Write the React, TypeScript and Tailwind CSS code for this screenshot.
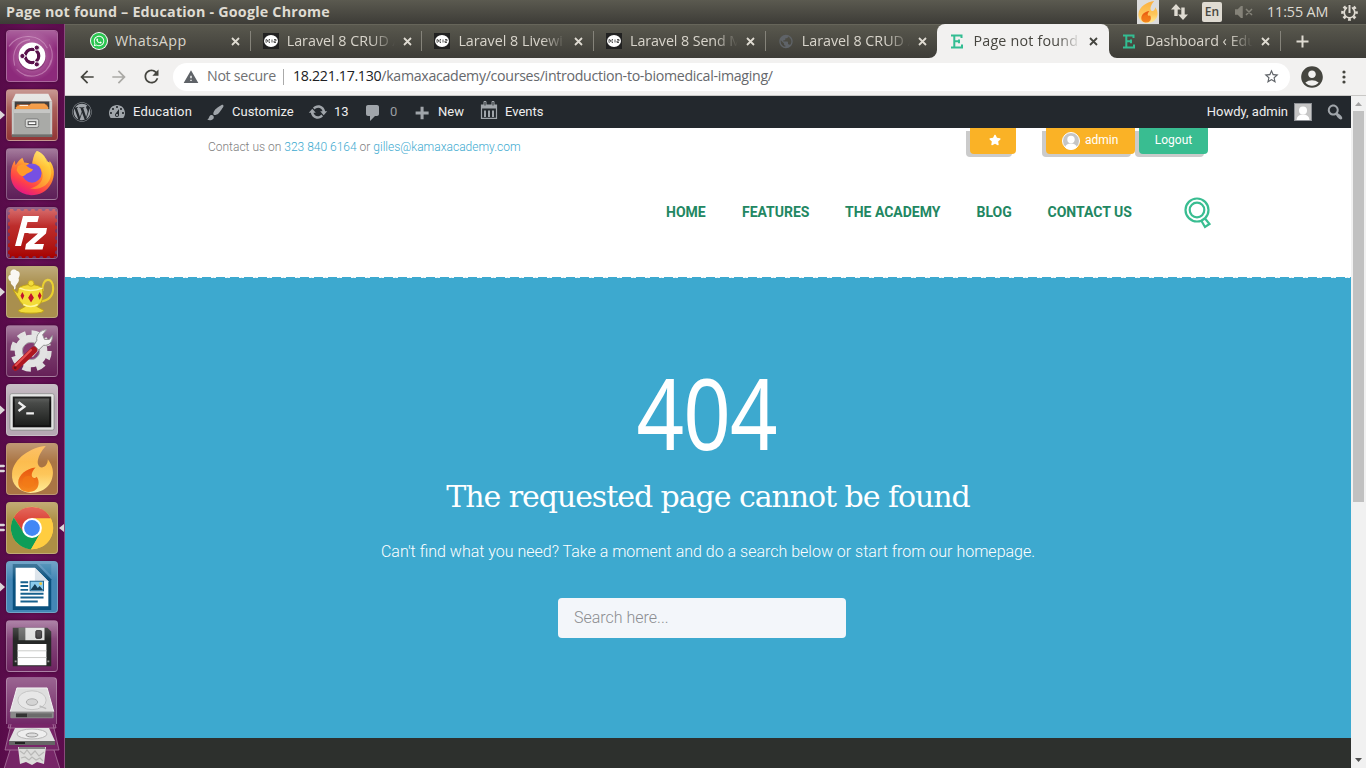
import React from "react";
import { FaWhatsapp, FaStar, FaWordpress } from "react-icons/fa";
import { MdStarBorder, MdAccountCircle, MdArrowBack, MdArrowForward, MdRefresh, MdWarning, MdPublic } from "react-icons/md";

function Flame({ size = 46 }: { size?: number }) {
  return (
    <svg width={size} height={size} viewBox="0 0 46 46">
      <defs>
        <linearGradient id="fl1" x1="0" y1="0" x2="0" y2="1">
          <stop offset="0" stopColor="#fbb040" />
          <stop offset="0.6" stopColor="#fdc65a" />
          <stop offset="1" stopColor="#ffee9a" />
        </linearGradient>
        <linearGradient id="fl2" x1="0" y1="0" x2="0" y2="1">
          <stop offset="0" stopColor="#e8560f" />
          <stop offset="1" stopColor="#f58a1f" />
        </linearGradient>
      </defs>
      <path d="M36 0C22 1 4 12 3 27c-1 11 7 18 18 19 14 0 22-9 22-20 0-6-3-10-5-13 0 5-3 8-6 8-6-1-5-11 4-21Z" fill="url(#fl1)" />
      <path d="M26 21c-9 1-17 7-17 15 0 6 5 9 10 9 7 0 10-4 10-9 0-3-1-5-2-6-1 1-2 2-3 1-3-1-2-6 2-10Z" fill="url(#fl2)" />
      <circle cx="19" cy="35" r="6" fill="#f47b16" opacity=".6" />
    </svg>
  );
}

function Tile({ tone, children, left, right }: { tone: string; children: React.ReactNode; left?: number; right?: boolean }) {
  return (
    <div className="relative flex h-[52px] w-[65px] shrink-0 pl-[6px]">
      <div className={"relative flex h-[52px] w-[52px] items-center justify-center overflow-hidden rounded-[4px] border border-white/25 shadow-[0_0_3px_rgba(0,0,0,0.35)] " + tone}>
        {children}
        <div className="pointer-events-none absolute inset-x-0 top-0 h-[18px] bg-gradient-to-b from-white/25 to-transparent" />
      </div>
      {left === 1 && (
        <svg className="absolute left-0 top-[21px]" width="5" height="10"><path d="M0 0.500L5 5L0 9.500Z" fill="#dcd6d9" /></svg>
      )}
      {left === 2 && (
        <svg className="absolute left-0 top-[21px]" width="5" height="9"><path d="M0 1H4L5 2L4 3H0ZM0 6H4L5 7L4 8H0Z" fill="#dcd6d9" stroke="#dcd6d9" strokeWidth=".5" /></svg>
      )}
      {right && (
        <svg className="absolute right-[1px] top-[21px]" width="5" height="10"><path d="M5 1L0 5L5 9Z" fill="#dcd6d9" /></svg>
      )}
    </div>
  );
}

function Disk() {
  return (
    <svg width="48" height="34" viewBox="0 0 50 36">
      <path d="M9 1H41L48 26H2Z" fill="#dedede" stroke="#f6f6f6" />
      <path d="M2 26H48V32Q48 33 47 33H3Q2 33 2 32Z" fill="#8a8a8a" />
      <path d="M8 28h12v4H8z" fill="#333" />
      <path d="M20 28h26v4H20z" fill="#6b6b6b" />
      <ellipse cx="25" cy="14" rx="15" ry="10" fill="#e7e7e7" stroke="#c3c3c3" />
      <ellipse cx="25" cy="16" rx="6" ry="3.500" fill="#d4d4d4" stroke="#aaa" />
      <path d="M33 20l7 3" stroke="#bbb" strokeWidth="1.500" />
    </svg>
  );
}

function Launcher() {
  return (
    <div className="flex h-full w-[65px] shrink-0 flex-col gap-[7px] overflow-hidden border-r border-[#8a4a7c] bg-gradient-to-r from-[#570b49] via-[#650f54] to-[#5b0c4c] pt-[6px]">
      <Tile tone="bg-[#90367e]">
        <svg width="52" height="52" viewBox="0 0 52 52">
          <defs>
            <radialGradient id="ub"><stop offset="0" stopColor="#c682b5" /><stop offset="1" stopColor="#8d2a7b" /></radialGradient>
          </defs>
          <rect width="52" height="52" fill="url(#ub)" />
          <path d="M2 16C12 2 34 2 42 18M44 14C54 32 38 52 18 46M8 36C4 20 12 10 24 9M46 30C42 48 22 52 10 40" fill="none" stroke="#dda9cf" strokeWidth="1.200" opacity=".5" />
          <circle cx="26" cy="27" r="14.500" fill="#6d1e5e" opacity=".5" />
          <circle cx="26" cy="26" r="14" fill="#fff" />
          <circle cx="26" cy="26" r="7" fill="none" stroke="#59114b" strokeWidth="3.400" />
          <path d="M26 26L17.500 26M26 26L30.500 18.200M26 26L30.500 33.800" stroke="#fff" strokeWidth="1.200" />
          <circle cx="26" cy="26" r="5.200" fill="#fff" />
          <circle cx="16" cy="26" r="2.700" fill="#59114b" stroke="#fff" />
          <circle cx="31" cy="17.300" r="2.700" fill="#59114b" stroke="#fff" />
          <circle cx="31" cy="34.700" r="2.700" fill="#59114b" stroke="#fff" />
        </svg>
      </Tile>
      <Tile tone="bg-gradient-to-b from-[#b5766f] to-[#923535]" left={1}>
        <svg width="52" height="52" viewBox="0 0 52 52">
          <path d="M9 4H43L47 12H5Z" fill="#e2e2df" />
          <path d="M5 12H47V47H5Z" fill="#c9c9c7" />
          <path d="M8 12H44V22H8Z" fill="#333" />
          <path d="M10 15H42V22H10Z" fill="#c85413" />
          <path d="M9 18L12 16H23L25 14H39L43 18V22H9Z" fill="#f49b45" />
          <path d="M13 16H22" stroke="#fff" strokeWidth="1" />
          <path d="M7 20H45V46H7Z" fill="#a9aaa7" />
          <path d="M7 20H45V24H7Z" fill="#c6c6c4" />
          <rect x="19" y="30" width="14" height="9" rx="2" fill="#d9dad8" stroke="#777" />
          <rect x="22" y="33" width="8" height="3" fill="#fff" stroke="#444" />
          <path d="M5 46H47V49H5Z" fill="#6f6f6d" />
        </svg>
      </Tile>
      <Tile tone="bg-gradient-to-b from-[#87507c] to-[#5d1f58]">
        <svg width="52" height="52" viewBox="0 0 52 52">
          <defs>
            <linearGradient id="ff" x1=".8" y1="0" x2=".3" y2="1"><stop offset="0" stopColor="#fff14b" /><stop offset=".4" stopColor="#ff9a27" /><stop offset=".75" stopColor="#ff4248" /><stop offset="1" stopColor="#e31587" /></linearGradient>
            <linearGradient id="ffy" x1="1" y1="0" x2="0" y2="1"><stop offset="0" stopColor="#fff04a" /><stop offset="1" stopColor="#ff8a24" /></linearGradient>
          </defs>
          <path d="M31 2C37 4 40 8 41 13C44 13 45 16 44 12C50 19 50 28 46 36C41 45 34 48 25 48C12 47 3 38 4 25C4 20 6 15 8 12L9 17C11 13 13 11 16 9L18 14C21 14 24 15 26 18C26 12 28 6 31 2Z" fill="url(#ff)" />
          <circle cx="26" cy="25" r="10" fill="#7650e3" />
          <path d="M11 18C20 13 20 20 27 21C26 24 23 24 20 26C16 31 12 26 10 22Z" fill="#ff9a2b" />
          <path d="M31 2C37 4 46 14 46 25C45 39 33 43 24 41C39 38 40 25 33 17C27 13 26 7 31 2Z" fill="url(#ffy)" opacity=".75" />
        </svg>
      </Tile>
      <Tile tone="bg-[#723363]">
        <div className="relative flex h-[49px] w-[49px] items-center justify-center bg-gradient-to-b from-[#c93c3c] to-[#a70000]">
          <svg className="absolute inset-0" width="49" height="49"><rect x="0" y="0" width="49" height="49" fill="none" stroke="#723363" strokeWidth="4" strokeDasharray="0.100 7" strokeLinecap="round" /></svg>
          <svg width="38" height="36" viewBox="0 0 38 36">
            <path d="M10 1H26L24.500 7H14.500L13 13H20L19 18H11.500L8 31H2ZM17 13H34L33 18.500L21 29H31L29.500 34.500H12L13 29L25 18.500H15.500Z" fill="#fff" />
          </svg>
        </div>
      </Tile>
      <Tile tone="bg-[#a98f4e]" left={1}>
        <svg width="52" height="52" viewBox="0 0 52 52">
          <path d="M7 24C9 18 3 20 4 15C0 13 1 8 4 8C2 3 8 1 10 4C15 5 13 10 12 12C14 16 8 18 9 22" fill="#fff" opacity=".92" />
          <path d="M37 25C36 10 48 10 48 22C48 31 42 35 34 36" fill="none" stroke="#e9cf2d" strokeWidth="2.200" />
          <path d="M6 23L10 30L12 33C14 37 17 40 19 41L12 45Q11 48 25 48Q39 48 38 45L31 41C36 38 38 34 37 22C31 17 18 17 12 22L11 27Z" fill="#f2dc39" stroke="#bfa216" />
          <circle cx="25" cy="17" r="3" fill="#f2dc39" stroke="#c8aa18" />
          <path d="M13 22Q24 27 37 22M17 39Q25 43 32 39" fill="none" stroke="#fff79e" strokeWidth="1.500" />
          <path d="M25 27L28 32L25 37L22 32ZM16 26L18 30L16 34L14 30ZM34 26L36 30L34 34L32 30Z" fill="#c3142c" />
        </svg>
      </Tile>
      <Tile tone="bg-gradient-to-b from-[#8b5480] to-[#662058]">
        <svg width="52" height="52" viewBox="0 0 52 52">
          <circle cx="25" cy="26" r="18.500" fill="none" stroke="#dedede" strokeWidth="6" strokeDasharray="8.500 6.030" />
          <circle cx="25" cy="26" r="13" fill="none" stroke="#e2e2e2" strokeWidth="8" />
          <circle cx="25" cy="26" r="9" fill="#853c73" stroke="#aaa" />
          <path d="M25 31L36 18" stroke="#c8c8c8" strokeWidth="5" />
          <path d="M31 15C30 9 35 4 41 4L37 9L39 14L44 14L47 10C48 17 43 21 38 20L33 25L28 20Z" fill="#f1f1f1" stroke="#888" />
          <path d="M9 43L28 25" stroke="#ae1720" strokeWidth="7" strokeLinecap="round" />
          <path d="M9 41L25 25" stroke="#e65353" strokeWidth="2" strokeLinecap="round" />
          <circle cx="8.500" cy="43.500" r="1.500" fill="#671117" />
        </svg>
      </Tile>
      <Tile tone="bg-[#b6a8b3]" left={1}>
        <svg width="52" height="52" viewBox="0 0 52 52">
          <defs><linearGradient id="tm" x1="0" y1="0" x2="0" y2="1"><stop offset="0" stopColor="#535553" /><stop offset="1" stopColor="#1b1d1b" /></linearGradient></defs>
          <rect x="3" y="9" width="46" height="38" rx="2" fill="#e2e3e2" stroke="#8a8a8a" />
          <rect x="7" y="13" width="38" height="30" fill="url(#tm)" stroke="#111" strokeWidth="2" />
          <path d="M12 18L18 22.500L12 27M20 29.500H28" fill="none" stroke="#f0f0f0" strokeWidth="2.500" />
        </svg>
      </Tile>
      <Tile tone="bg-[#aa7544]" left={2}><Flame size={47} /></Tile>
      <Tile tone="bg-[#ad8f45]" left={2} right>
        <svg width="52" height="52" viewBox="0 0 52 52">
          <circle cx="26" cy="26" r="22" fill="#ffcd40" />
          <path d="M26 26L26 16H45.500A22 22 0 0 0 7 15L17.500 31Z" fill="#dc4437" />
          <path d="M7 15A22 22 0 0 0 25 48L35 31L17.500 31Z" fill="#0f9d58" />
          <path d="M25 48L34.700 31L35.500 25L26 16H45.600A22 22 0 0 1 25 48Z" fill="#ffcd40" />
          <circle cx="26" cy="26" r="10.300" fill="#fff" />
          <circle cx="26" cy="26" r="8.200" fill="#4387f5" />
        </svg>
      </Tile>
      <Tile tone="bg-[#4386b5]" left={1}>
        <svg width="52" height="52" viewBox="0 0 52 52">
          <path d="M6 2H31L46 18V50H6Z" fill="#0a517e" />
          <path d="M34 2H46V14Z" fill="#2877a7" />
          <path d="M9 6H29L43 20V46H9Z" fill="#fff" />
          <path d="M29 6V20H43Z" fill="#dbe3ea" />
          <path d="M14 21H22M14 25H22M14 29H22M14 33H38M14 37H38M14 41H32" stroke="#17618e" strokeWidth="2" />
          <rect x="24" y="20" width="14" height="10" fill="#8acbec" stroke="#17618e" />
          <path d="M24.500 29L29 23L32 27L34 25L37.500 29Z" fill="#153f57" />
          <circle cx="35" cy="22.500" r="1.500" fill="#f0c642" />
        </svg>
      </Tile>
      <Tile tone="bg-gradient-to-b from-[#925a8a] to-[#6d2260]">
        <svg width="52" height="52" viewBox="0 0 52 52">
          <path d="M6 7H42L46 11V47H6Z" fill="#262827" />
          <path d="M12 7H19V20H12Z" fill="#626462" />
          <path d="M19 7H39V20H19Z" fill="#dfe1df" />
          <rect x="30" y="10" width="6" height="8" rx="1" fill="#444" stroke="#222" />
          <path d="M11 24H41V46H11Z" fill="#fff" />
          <path d="M11 31H41M11 38H41" stroke="#c9cac7" />
          <path d="M8 42H10M42 42H44" stroke="#999" strokeWidth="2" />
        </svg>
      </Tile>
      <div className="-mt-[2px] flex flex-col items-center pr-[1px]">
        <div className="flex h-[47px] w-[51px] items-end justify-center rounded-t-[4px] border border-b-0 border-white/25 bg-gradient-to-b from-[#9a6491] to-[#722767] pb-[3px]"><Disk /></div>
        <svg width="60" height="45" viewBox="0 0 60 45">
          <path d="M7 0L6 4H54L53 0M9 0L3 26H57L51 0M8 26L2 45H58L52 26" fill="#8b3b7c" fillOpacity=".55" stroke="#b484aa" strokeOpacity=".7" />
          <path d="M13 4H47L53 17H7Z" fill="#e1e1e1" />
          <ellipse cx="30" cy="10" rx="15" ry="5" fill="#eee" stroke="#b8b8b8" />
          <ellipse cx="30" cy="11" rx="6" ry="2" fill="#ddd" stroke="#999" />
          <path d="M7 17H53V21H7Z" fill="#666" /><path d="M13 18H23V20H13Z" fill="#222" />
          <path d="M16 23H44L42 40L35 38L30 41L24 38L18 40Z" fill="#dddddb" />
          <path d="M18 27L22 30L25 26L29 31L33 27L37 32L42 28M19 34L23 33L27 36L30 33L34 36L38 34L41 37" fill="none" stroke="#b9b9b7" strokeWidth="1.200" />
          <path d="M17 24H43" stroke="#666" strokeWidth="1.500" />
        </svg>
      </div>
    </div>
  );
}

function Close({ dark }: { dark?: boolean }) {
  return (
    <svg width="9" height="9" viewBox="0 0 9 9" className={dark ? "text-[#45453f]" : "text-[#dfdbd2]"}>
      <path d="M1 1L8 8M8 1L1 8" stroke="currentColor" strokeWidth="1.800" />
    </svg>
  );
}

function DevIcon() {
  return (
    <svg width="16" height="16"><rect width="16" height="16" fill="#212121" /><ellipse cx="8" cy="8" rx="7" ry="6" fill="#fff" /><path d="M3 6.500v3M3 6.500q2 0 1.500 2l-1 1M7 6.500h-1v3h1M9 6.500v3M11 6.500h2v1.500h-2v1.500h2" fill="none" stroke="#444" strokeWidth=".9" /></svg>
  );
}

function EIcon() {
  return (
    <svg width="14" height="15" viewBox="0 0 14 15"><path d="M2 1.500H11.500V4M2 13.500H12V10.500M4.300 1.500V13.500M4.300 7.300H9M9 5.500V9.200M1 13.500H4M1 1.500H4" fill="none" stroke="#33bd92" strokeWidth="2" /></svg>
  );
}

function Tab({ icon, title, active, fade, last, spacing }: { icon: React.ReactNode; title: string; active?: boolean; fade?: boolean; last?: boolean; spacing?: string }) {
  return (
    <div className={"relative flex h-[34px] w-[171.700px] shrink-0 items-center " + (active ? "z-10 rounded-t-[8px] bg-[#f2f1f0]" : "")}>
      <div className="ml-[12px] flex w-[16px] items-center justify-center">{icon}</div>
      <div className={"ml-[8px] w-[108px] overflow-hidden whitespace-nowrap text-[14.300px] leading-[20px] " + (spacing ?? "") + " " + (active ? "text-[#474640]" : "text-[#d9d5cc]") + (fade ? " [mask-image:linear-gradient(to_right,black_78%,transparent_100%)]" : "")}>{title}</div>
      <div className="ml-[8px] flex"><Close dark={active} /></div>
      {active && (
        <>
          <svg className="absolute -left-[8px] bottom-0" width="8" height="8"><path d="M8 0V8H0A8 8 0 0 0 8 0Z" fill="#f2f1f0" /></svg>
          <svg className="absolute -right-[8px] bottom-0" width="8" height="8"><path d="M0 0V8H8A8 8 0 0 1 0 0Z" fill="#f2f1f0" /></svg>
        </>
      )}
      {!active && !last && <div className="absolute right-0 top-[7px] h-[20px] w-px bg-[#85837a]" />}
    </div>
  );
}

function TitleBar() {
  return (
    <div className="flex h-[24px] w-full items-center bg-gradient-to-b from-[#5b5a50] to-[#3d3c37] pl-[6px] text-[#dfdbd2]">
      <div className="w-[1131px] whitespace-nowrap text-[14.300px] font-bold leading-[22px] tracking-[0.210px]">Page not found – Education - Google Chrome</div>
      <div className="flex h-[24px] w-[22px] items-center justify-center self-start bg-[#dcdcdc]"><Flame size={22} /></div>
      <svg className="ml-[11px]" width="20" height="18" viewBox="0 0 20 18"><path d="M6 1L1 6.500H4.300V13H7.700V6.500H11ZM13 17L8 11.500H11.300V4.500H14.700V11.500H18Z" fill="#dfdbd2" /></svg>
      <div className="ml-[12px] flex h-[20px] w-[20px] items-center justify-center rounded-[2px] bg-[#dfdbd2] text-[12px] font-semibold text-[#484740]">En</div>
      <svg className="ml-[13px]" width="18" height="12" viewBox="0 0 18 12"><path d="M0 4H3L7 0V12L3 8H0ZM11 3L17 9M17 3L11 9" fill="#858379" stroke="#858379" strokeWidth="1.500" /></svg>
      <div className="ml-[14px] w-[63px] whitespace-nowrap text-[14.300px] leading-[22px]  tracking-[-0.100px]">11:55 AM</div>
      <svg className="ml-[11px]" width="17" height="17" viewBox="0 0 17 17">
        <circle cx="8.500" cy="8.500" r="7" fill="none" stroke="#dfdbd2" strokeWidth="2.600" strokeDasharray="2.750 2.747" strokeDashoffset="1.400" />
        <circle cx="8.500" cy="8.500" r="5.300" fill="none" stroke="#dfdbd2" strokeWidth="1.700" />
        <path d="M8.500 0V9" stroke="#47463f" strokeWidth="4.500" /><path d="M8.500 1V9" stroke="#dfdbd2" strokeWidth="2" />
      </svg>
    </div>
  );
}

function Dash({ d, size = 20 }: { d: string; size?: number }) {
  return <svg width={size} height={size} viewBox="0 0 20 20" className="shrink-0 fill-[#a0a5aa]"><path fillRule="evenodd" d={d} /></svg>;
}

const DASHBOARD = "M3.760 16h12.480c1.100-1.370 1.760-3.110 1.760-5 0-4.420-3.580-8-8-8s-8 3.580-8 8c0 1.890.660 3.630 1.760 5zM10 4c.550 0 1 .450 1 1s-.450 1-1 1-1-.450-1-1 .450-1 1-1zM6 6c.550 0 1 .450 1 1s-.450 1-1 1-1-.450-1-1 .450-1 1-1zm8 0c.550 0 1 .450 1 1s-.450 1-1 1-1-.450-1-1 .450-1 1-1zm-5.370 5.550L12 7v6c0 1.100-.900 2-2 2s-2-.900-2-2c0-.570.240-1.080.630-1.450zM4 10c.550 0 1 .450 1 1s-.450 1-1 1-1-.450-1-1 .450-1 1-1zm12 0c.550 0 1 .450 1 1s-.450 1-1 1-1-.450-1-1 .450-1 1-1zm-5 3c0-.550-.450-1-1-1s-1 .450-1 1 .450 1 1 1 1-.450 1-1z";
const BRUSH = "M18.330 3.570s.270-.800-.310-1.360c-.530-.520-1.220-.240-1.220-.240-.610.300-5.760 3.470-7.670 5.570-.860.960-2.060 3.790-1.090 4.820.920.980 3.960-.170 4.790-1 2.060-2.060 5.210-7.170 5.500-7.790zM1.400 17.650c2.370-1.560 1.460-3.410 3.230-4.640.930-.650 2.220-.620 3.080.290.630.670.800 2.570-.160 3.460-1.570 1.450-4 1.550-6.150.890z";
const UPDATE = "M10.200 3.280c3.530 0 6.430 2.610 6.920 6h2.080l-3.500 4-3.500-4h2.320c-.450-1.970-2.210-3.450-4.320-3.450-1.450 0-2.730.710-3.540 1.780L4.950 5.660C6.230 4.200 8.110 3.280 10.200 3.280zm-.400 13.440c-3.520 0-6.430-2.610-6.920-6H.8l3.500-4c1.170 1.330 2.330 2.670 3.500 4H5.480c.450 1.970 2.210 3.450 4.320 3.450 1.450 0 2.730-.710 3.540-1.780l1.710 1.950c-1.280 1.460-3.150 2.380-5.250 2.380z";
const COMMENT = "M5 3h9c1.100 0 2 .900 2 2v7c0 1.100-.900 2-2 2h-2l-5 5v-5H5c-1.100 0-2-.900-2-2V5c0-1.100.900-2 2-2z";
const PLUS = "M17.500 9v3h-5.300v5.200H9V12H3.800V9H9V4h3.200v5z";
const SEARCH = "M12.140 4.180c1.870 1.870 2.110 4.750.720 6.890.120.100.220.210.360.310.200.160.470.360.810.590.340.240.560.390.660.470.420.310.730.570.940.780.320.320.600.650.840 1 .250.350.440.690.590 1.040.140.350.210.680.180 1-.020.320-.140.590-.360.810s-.490.340-.810.360c-.310.020-.650-.040-.990-.190-.350-.140-.700-.340-1.040-.590-.350-.240-.680-.520-1-.840-.210-.210-.470-.520-.770-.930-.100-.130-.250-.350-.470-.660-.220-.320-.400-.570-.560-.780-.160-.200-.290-.350-.440-.500-2.070 1.090-4.690.760-6.440-.980-2.140-2.150-2.140-5.640 0-7.780 2.150-2.150 5.630-2.150 7.780 0zm-1.410 6.360c1.360-1.370 1.360-3.580 0-4.950-1.370-1.370-3.590-1.370-4.950 0-1.370 1.370-1.370 3.580 0 4.950 1.360 1.370 3.580 1.370 4.950 0z";

function CalendarIcon() {
  return (
    <svg width="20" height="20" viewBox="0 0 20 20" className="-mt-[4px] shrink-0">
      <path d="M2.500 5H17.500V18.300H2.500Z" fill="none" stroke="#a0a5aa" strokeWidth="1.200" />
      <path d="M2 5H18V8.500H2ZM5 10.500H7V17H5ZM9 10.500H11V17H9ZM13 10.500H15V17H13Z" fill="#a0a5aa" />
      <path d="M5 1.500H7V6H5ZM13 1.500H15V6H13Z" fill="#23282d" stroke="#a0a5aa" />
    </svg>
  );
}

function AdminBar() {
  return (
    <div className="flex h-[32px] w-full items-center bg-[#23282d] font-['Roboto',sans-serif] text-[13px] leading-[32px] text-[#eee]">
      <div className="ml-[7px] flex h-[20px] w-[20px] items-center justify-center text-[#a0a5aa]"><FaWordpress size={20} /></div>
      <div className="ml-[15px] flex w-[99px] items-center gap-[6px]"><Dash d={DASHBOARD} /><span className="whitespace-nowrap tracking-[0.150px]">Education</span></div>
      <div className="flex w-[102px] items-center gap-[7px]"><Dash d={BRUSH} size={19} /><span className="whitespace-nowrap">Customize</span></div>
      <div className="flex w-[55px] items-center gap-[6px]"><Dash d={UPDATE} /><span>13</span></div>
      <div className="flex w-[49px] items-center gap-[7px]"><Dash d={COMMENT} /><span className="text-[#9a9ea2]">0</span></div>
      <div className="flex w-[67px] items-center gap-[7px]"><Dash d={PLUS} size={19} /><span>New</span></div>
      <div className="flex items-center gap-[6px]"><CalendarIcon /><span>Events</span></div>
      <div className="ml-auto flex items-center">
        <span className="whitespace-nowrap">Howdy, admin</span>
        <svg className="ml-[6px] -mt-px" width="18" height="18"><rect x=".5" y=".5" width="17" height="17" fill="#c5c5c5" stroke="#8c8f94" /><circle cx="9" cy="7.500" r="4" fill="#fff" /><path d="M2.500 17Q3 11.500 9 11.500T15.500 17Z" fill="#fff" /></svg>
        <div className="ml-[13px] mr-[6px]"><Dash d={SEARCH} /></div>
      </div>
    </div>
  );
}

function Page() {
  return (
    <div className="flex w-[1286px] flex-col">
      <AdminBar />
      <div className="flex h-[149px] w-full flex-col bg-white font-['Roboto',sans-serif]">
        <div className="flex h-[38px] items-start pl-[143px] text-[12px]">
          <div className="mt-[10px] w-[758px] whitespace-nowrap font-light leading-[18px] text-[#808080]">
            Contact us on <span className="text-[#3daad0]">323 840 6164</span> or <span className="text-[#3daad0]">gilles@kamaxacademy.com</span>
          </div>
          <div className="ml-[4px] flex h-[26px] w-[46px] items-center justify-center rounded-b-[4px] bg-[#fab226] pl-[3px] pb-[3px] text-white shadow-[-4px_3px_0_#cbcbcb]"><FaStar size={12} /></div>
          <div className="ml-[30px] flex h-[26px] w-[89px] rounded-b-[4px] bg-[#fab226] pl-[16px] text-white shadow-[-4px_3px_0_#cbcbcb]">
            <svg className="mt-[4px]" width="18" height="18"><circle cx="9" cy="9" r="8.500" fill="#c5c5c5" stroke="#fff" /><circle cx="9" cy="7.500" r="3.700" fill="#fff" /><path d="M3 15.500Q4 11.500 9 11.500T15 15.500Q12 18 9 17.500Q5 18 3 15.500Z" fill="#fff" /></svg>
            <span className="ml-[5px] mt-[3px] leading-[18px]">admin</span>
          </div>
          <div className="ml-[4px] h-[26px] w-[69px] rounded-b-[4px] bg-[#39bd91] pt-[3px] text-center leading-[18px] text-white shadow-[-4px_3px_0_#cbcbcb]">Logout</div>
        </div>
        <div className="mt-[29px] flex h-[34px] items-center pl-[601px] text-[14px] font-bold text-[#228762]">
          <span className="w-[76px]">HOME</span>
          <span className="w-[103px]">FEATURES</span>
          <span className="w-[131.500px] whitespace-nowrap">THE ACADEMY</span>
          <span className="w-[71px]">BLOG</span>
          <span className="w-[135.500px] whitespace-nowrap">CONTACT US</span>
          <svg className="mt-[2px]" width="29" height="32" viewBox="0 0 29 32" fill="none" stroke="#39bd91" strokeWidth="2.200">
            <circle cx="14" cy="13" r="11.500" /><circle cx="14" cy="13" r="7.300" /><path d="M18.500 24L22 30L26.500 27L22 21.500" />
          </svg>
        </div>
      </div>
      <div className="h-px w-full bg-[repeating-linear-gradient(to_right,#3daad0_0_6px,#f4fafc_6px_8px,#cfe6ee_8px_9px,#f4fafc_9px_11px,#3daad0_11px_14px)]" />
      <div className="flex h-[460px] w-full flex-col items-center bg-[#3da9cf] text-white">
        <div className="mt-[86px] h-[96px] origin-center translate-x-[-1px] scale-x-[0.850] text-center font-['Noto_Sans'] text-[98px] font-normal leading-[96px] tracking-[-1px]">404</div>
        <div className="mt-[15px] h-[44px] whitespace-nowrap text-center font-['DejaVu_Serif'] text-[30px] leading-[44px] tracking-[-1.050px]">The requested page cannot be found</div>
        <div className="mt-[21px] whitespace-nowrap font-['Roboto'] text-[16px] font-light leading-[24px]">Can't find what you need? Take a moment and do a search below or start from our homepage.</div>
        <div className="mr-[12px] mt-[34px] flex h-[40px] w-[288px] items-center rounded-[4px] bg-[#f3f6fa] pl-[16px] font-['Roboto'] text-[16px] font-light text-[#8b8d90]">Search here...</div>
      </div>
      <div className="h-[30px] w-full bg-[#2d302d]" />
    </div>
  );
}

export default function App() {
  return (
    <div className="flex h-[768px] w-[1366px] flex-col overflow-hidden bg-white font-['Open_Sans',sans-serif]">
      <TitleBar />
      <div className="flex h-[744px] w-full">
        <Launcher />
        <div className="flex w-[1301px] flex-col">
          <div className="flex h-[34px] w-full border-t border-[#66655a] bg-gradient-to-b from-[#59584e] to-[#3d3c37] pl-[14px]">
            <div className="-mt-px flex">
              <Tab icon={<div className="flex h-[16px] w-[16px] items-center justify-center rounded-full bg-[#2bc551] text-white ring-1 ring-white"><FaWhatsapp size={12} /></div>} title="WhatsApp" spacing="tracking-[0.400px]" />
              <Tab icon={<DevIcon />} title="Laravel 8 CRUD A" fade />
              <Tab icon={<DevIcon />} title="Laravel 8 Livewi" fade />
              <Tab icon={<DevIcon />} title="Laravel 8 Send M" fade spacing="tracking-[-0.100px]" />
              <Tab icon={<MdPublic size={17} color="#5f6368" />} title="Laravel 8 CRUD A" fade last />
              <Tab icon={<EIcon />} title="Page not found" fade active spacing="tracking-[0.200px]" />
              <Tab icon={<EIcon />} title="Dashboard ‹ Edu" fade />
            </div>
            <svg className="ml-[15px] mt-[10px]" width="13" height="13"><path d="M6.500 0.500V12.500M0.500 6.500H12.500" stroke="#dfdbd2" strokeWidth="2" /></svg>
          </div>
          <div className="flex h-[38px] w-full items-center border-b border-[#c9c8c6] bg-[#f2f1f0] text-[#45453f]">
            <MdArrowBack className="ml-[12px]" size={20} />
            <MdArrowForward className="ml-[12px] text-[#aaa9a5]" size={20} />
            <MdRefresh className="ml-[12px]" size={21} />
            <div className="ml-[11px] flex h-[28px] w-[1117px] items-center rounded-full bg-white text-[14.200px]">
              <MdWarning className="ml-[10px] text-[#5f6368]" size={16} />
              <span className="-mt-[2px] ml-[8px] w-[76px] whitespace-nowrap tracking-[-0.300px] text-[#707174]">Not secure</span>
              <div className="h-[16px] w-px bg-[#aaa]" />
              <span className="-mt-[2px] ml-[9px] whitespace-nowrap tracking-[-0.310px] text-[#66686c]"><span className="text-[#202124]">18.221.17.130</span>/kamaxacademy/courses/introduction-to-biomedical-imaging/</span>
              <MdStarBorder className="ml-auto mr-[10px] text-[#5f6368]" size={17} />
            </div>
            <MdAccountCircle className="ml-[9px]" size={26} />
            <svg className="ml-[17px]" width="4" height="14"><circle cx="2" cy="2" r="1.600" fill="#45453f" /><circle cx="2" cy="7" r="1.600" fill="#45453f" /><circle cx="2" cy="12" r="1.600" fill="#45453f" /></svg>
          </div>
          <div className="flex h-[672px]">
            <Page />
            <div className="flex w-[15px] flex-col items-center bg-[#f1f1f1]">
              <svg width="15" height="15"><path d="M4 10L7.500 6L11 10Z" fill="#a3a3a3" /></svg>
              <div className="h-[391px] w-[11px] bg-[#c1c1c1]" />
              <svg className="mt-auto" width="15" height="15"><path d="M4 5L7.500 9L11 5Z" fill="#505050" /></svg>
            </div>
          </div>
        </div>
      </div>
    </div>
  );
}
